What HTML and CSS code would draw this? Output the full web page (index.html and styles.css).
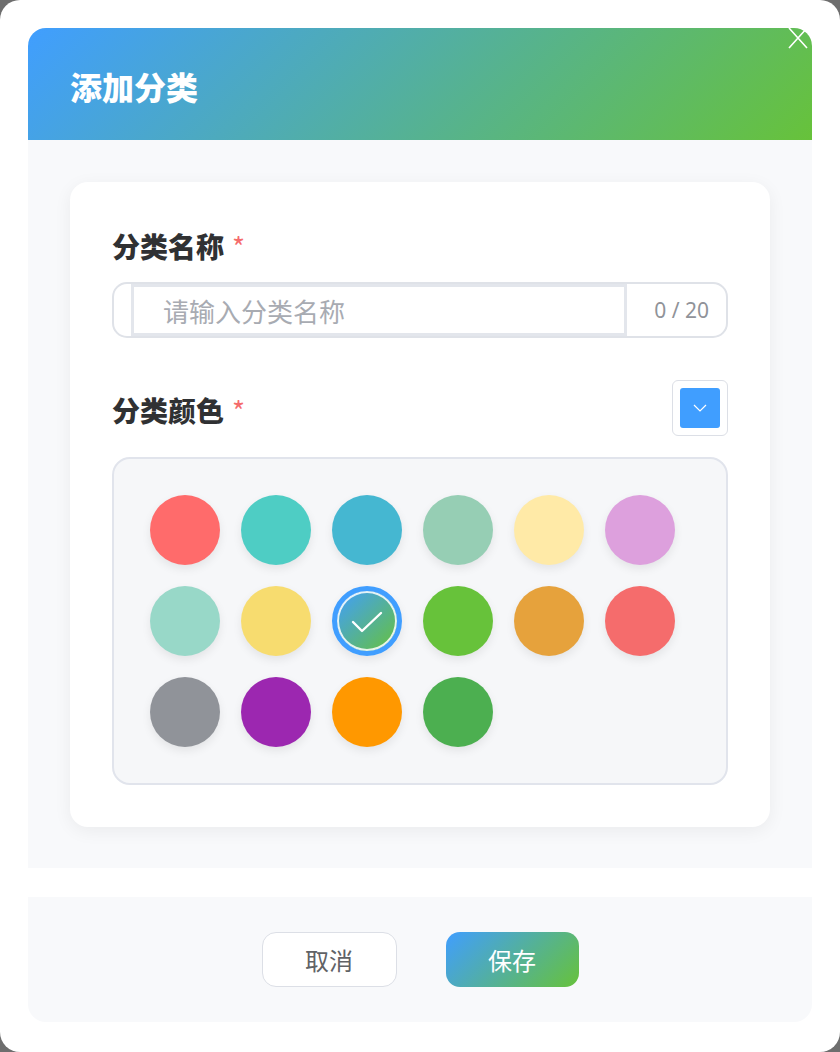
FILE: index.html
```html
<!DOCTYPE html>
<html lang="zh-CN">
<head>
<meta charset="utf-8">
<title>添加分类</title>
<link rel="stylesheet" href="styles.css">
</head>
<body>
<div class="dialog">
  <div class="header">
    <h1 class="title">添加分类</h1>
  </div>
  <button class="close" aria-label="关闭">
    <svg width="22" height="22" viewBox="0 0 22 22"><path d="M2 1 L20 21 M20 1 L2 21" stroke="#fff" stroke-width="1.6" fill="none"/></svg>
  </button>
  <div class="body">
    <div class="card">
      <div class="label">分类名称<span class="req">*</span></div>
      <div class="input-wrap">
        <div class="input">请输入分类名称</div>
        <div class="count">0 / 20</div>
      </div>
      <div class="row">
        <div class="label">分类颜色<span class="req">*</span></div>
        <div class="picker">
          <div class="picker-swatch">
            <svg width="14" height="8" viewBox="0 0 14 8"><path d="M1 1 L7 7 L13 1" stroke="#fff" stroke-width="1.2" fill="none"/></svg>
          </div>
        </div>
      </div>
      <div class="palette">
        <span class="dot c1"></span>
        <span class="dot c2"></span>
        <span class="dot c3"></span>
        <span class="dot c4"></span>
        <span class="dot c5"></span>
        <span class="dot c6"></span>
        <span class="dot c7"></span>
        <span class="dot c8"></span>
        <span class="dot selected">
          <svg width="32" height="24" viewBox="0 0 32 24"><path d="M2 12 L11 21 L30 3" stroke="#fff" stroke-width="2.4" fill="none" stroke-linecap="round" stroke-linejoin="round"/></svg>
        </span>
        <span class="dot c10"></span>
        <span class="dot c11"></span>
        <span class="dot c12"></span>
        <span class="dot c13"></span>
        <span class="dot c14"></span>
        <span class="dot c15"></span>
        <span class="dot c16"></span>
      </div>
    </div>
  </div>
  <div class="footer">
    <button class="btn btn-cancel">取消</button>
    <button class="btn btn-save">保存</button>
  </div>
</div>
</body>
</html>
```

FILE: styles.css
```css
html, body {
  margin: 0;
  padding: 0;
  background: #6e6e6e;
}
body {
  font-family: "Noto Sans", "Noto Sans CJK SC", sans-serif;
}
.dialog {
  position: relative;
  width: 840px;
  height: 1052px;
  box-sizing: border-box;
  background: #fff;
  border-radius: 20px;
  padding: 28px 28px 30px;
  display: flex;
  flex-direction: column;
}
.header {
  height: 112px;
  background: linear-gradient(135deg, #409eff 0%, #67c23a 100%);
  border-radius: 18px 18px 0 0;
  display: flex;
  align-items: center;
  padding-left: 42px;
}
.title {
  margin: 4px 0 0;
  font-family: "Noto Sans CJK SC", sans-serif;
  font-size: 32px;
  font-weight: 900;
  color: #fff;
  line-height: 1;
}
.close {
  position: absolute;
  top: 27px;
  right: 31px;
  width: 22px;
  height: 22px;
  padding: 0;
  border: 0;
  background: transparent;
  display: block;
}
.close svg { display: block; }
.body {
  height: 728px;
  box-sizing: border-box;
  background: #f8f9fb;
  padding: 42px;
}
.card {
  height: 645px;
  box-sizing: border-box;
  background: #fff;
  border-radius: 18px;
  box-shadow: 0 4px 18px rgba(0, 0, 0, 0.06);
  padding: 44px 42px 42px;
}
.label {
  font-family: "Noto Sans CJK SC", sans-serif;
  font-size: 28px;
  font-weight: 900;
  color: #303133;
  line-height: 40px;
  height: 40px;
  display: flex;
  align-items: center;
}
.req {
  color: #f56c6c;
  font-weight: 400;
  font-size: 28px;
  margin-left: 8px;
  position: relative;
  top: 0;
}
.input-wrap {
  margin-top: 16px;
  height: 56px;
  box-sizing: border-box;
  border: 2px solid #dfe2e8;
  border-radius: 15px;
  display: flex;
  align-items: stretch;
  padding-left: 17px;
  background: #fff;
}
.input {
  width: 496px;
  box-sizing: border-box;
  border: 3px solid #e3e6ec;
  display: flex;
  align-items: center;
  padding-left: 29px;
  font-family: "Noto Sans CJK SC", sans-serif;
  font-size: 26px;
  color: #a8abb2;
}
.count {
  flex: 1;
  display: flex;
  align-items: center;
  justify-content: flex-end;
  padding-right: 17px;
  font-size: 21px;
  color: #909399;
}
.row {
  margin-top: 42px;
  height: 56px;
  display: flex;
  align-items: center;
  justify-content: space-between;
}
.row .label { margin-top: 4px; }
.picker {
  width: 56px;
  height: 56px;
  box-sizing: border-box;
  border: 1px solid #dcdfe6;
  border-radius: 6px;
  background: #fff;
  display: flex;
  align-items: center;
  justify-content: center;
}
.picker-swatch {
  width: 40px;
  height: 40px;
  border-radius: 3px;
  background: #409eff;
  display: flex;
  align-items: center;
  justify-content: center;
}
.picker-swatch svg { display: block; }
.palette {
  margin-top: 21px;
  height: 328px;
  box-sizing: border-box;
  border: 2px solid #e1e4ec;
  border-radius: 18px;
  background: #f6f7f9;
  padding: 36px;
  display: flex;
  flex-wrap: wrap;
  align-content: flex-start;
  gap: 21px;
}
.dot {
  width: 70px;
  height: 70px;
  border-radius: 50%;
  box-shadow: 0 4px 10px rgba(0, 0, 0, 0.08);
  display: flex;
  align-items: center;
  justify-content: center;
  box-sizing: border-box;
}
.c1 { background: #ff6b6b; }
.c2 { background: #4ecdc4; }
.c3 { background: #45b7d1; }
.c4 { background: #96ceb4; }
.c5 { background: #ffeaa7; }
.c6 { background: #dda0dd; }
.c7 { background: #98d8c8; }
.c8 { background: #f7dc6f; }
.c10 { background: #67c23a; }
.c11 { background: #e6a23c; }
.c12 { background: #f56c6c; }
.c13 { background: #909399; }
.c14 { background: #9c27b0; }
.c15 { background: #ff9800; }
.c16 { background: #4caf50; }
.selected {
  border: 5px solid #409eff;
  background: linear-gradient(135deg, #409eff 0%, #67c23a 100%);
  background-clip: padding-box;
  box-shadow: inset 0 0 0 2px rgba(255, 255, 255, 0.85), 0 4px 10px rgba(0, 0, 0, 0.08);
}
.selected svg { display: block; margin-top: 2px; }
.footer {
  margin-top: 29px;
  height: 125px;
  background: #f8f9fb;
  border-radius: 0 0 18px 18px;
  display: flex;
  align-items: center;
  justify-content: center;
  gap: 49px;
}
.btn {
  height: 55px;
  border-radius: 14px;
  font-family: "Noto Sans CJK SC", sans-serif;
  font-size: 24px;
  padding: 0;
  display: flex;
  align-items: center;
  justify-content: center;
}
.btn-cancel {
  width: 135px;
  background: #fff;
  border: 1px solid #dcdfe6;
  color: #606266;
}
.btn-save {
  width: 133px;
  border: 0;
  color: #fff;
  background: linear-gradient(135deg, #409eff 0%, #67c23a 100%);
}
```
